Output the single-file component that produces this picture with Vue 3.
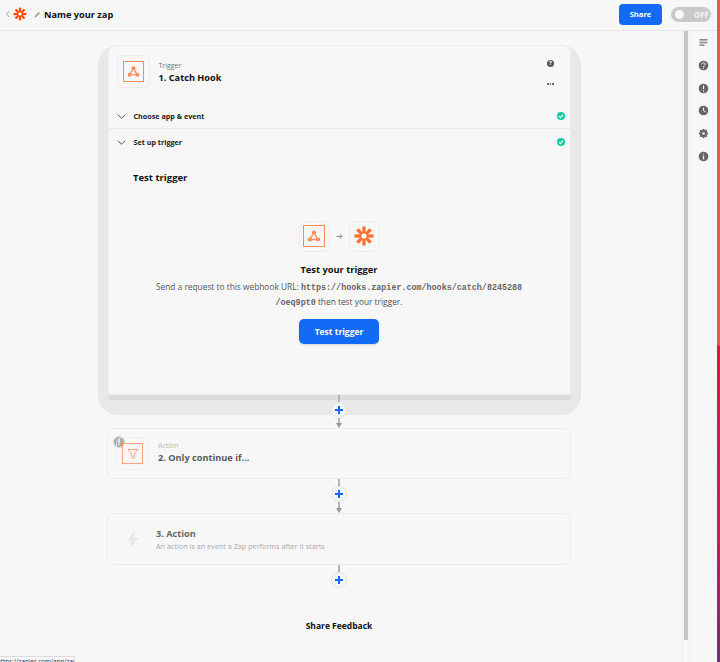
<script setup>
const sideIcons = ['lines', 'help', 'alert', 'clock', 'gear', 'info']
const gearTeeth = [0, 45, 90, 135, 180, 225, 270, 315]
const zapSpokes = [0, 45, 90, 135]
</script>

<template>
	<div class="app">
		<div class="shell">
			<header class="topbar">
				<div class="crumbs">
					<svg class="back" width="6" height="8" viewBox="0 0 6 8"><path d="M4.5 .8 1.5 4l3 3.2" fill="none" stroke="#aaa" stroke-width="1"/></svg>
					<svg class="logo" width="14" height="14" viewBox="0 0 14 14">
						<line v-for="a in zapSpokes" :key="a" x1="7" y1="0.6" x2="7" y2="13.4" stroke="#ff4a00" stroke-width="2.3" :transform="`rotate(${a} 7 7)`"/>
						<circle cx="7" cy="7" r="1.7" fill="#f7f7f7"/>
					</svg>
					<svg class="pencil" width="7" height="7" viewBox="0 0 7 7"><path d="M.6 6.4.9 4.9 4.9.9l1.2 1.2-4 4z" fill="#999"/></svg>
					<span class="zap-name">Name your zap</span>
				</div>
				<div class="actions">
					<button class="share">Share</button>
					<div class="toggle"><i></i><span>OFF</span></div>
				</div>
			</header>

			<div class="body">
				<main class="canvas">
					<section class="halo">
						<div class="card-open">
							<div class="step-head">
								<div class="icon-box">
									<div class="hook-square">
										<svg width="13" height="13" viewBox="0 0 16 16"><g fill="#ff8a5c"><circle cx="8" cy="4" r="2.4"/><circle cx="3.2" cy="12" r="2.4"/><circle cx="12.8" cy="12" r="2.4"/></g><path d="M7.4 5 3.6 11.4M3.2 12h9.6M9 6l3.2 5.6" fill="none" stroke="#ff8a5c" stroke-width="1.5"/></svg>
									</div>
								</div>
								<div class="step-text">
									<span class="kind">Trigger</span>
									<strong>1. Catch Hook</strong>
								</div>
								<div class="head-tools">
									<span class="q">?</span>
									<span class="dots"><i></i><i></i><i></i></span>
								</div>
							</div>

							<div class="row row-line">
								<svg class="chev" width="9" height="5" viewBox="0 0 9 5"><path d="M.7.7 4.5 4.2 8.3.7" fill="none" stroke="#555" stroke-width="1"/></svg>
								<span>Choose app &amp; event</span>
								<span class="ok"><svg width="6" height="6" viewBox="0 0 6 6"><path d="M1 3.2 2.4 4.6 5 1.6" fill="none" stroke="#fff" stroke-width="1.1"/></svg></span>
							</div>
							<div class="row">
								<svg class="chev" width="9" height="5" viewBox="0 0 9 5"><path d="M.7.7 4.5 4.2 8.3.7" fill="none" stroke="#555" stroke-width="1"/></svg>
								<span>Set up trigger</span>
								<span class="ok"><svg width="6" height="6" viewBox="0 0 6 6"><path d="M1 3.2 2.4 4.6 5 1.6" fill="none" stroke="#fff" stroke-width="1.1"/></svg></span>
							</div>

							<h2 class="test-title">Test trigger</h2>

							<div class="test-body">
								<div class="pair">
									<div class="zap-box">
										<div class="hook-square large">
											<svg width="14" height="14" viewBox="0 0 16 16"><g fill="#ff8a5c"><circle cx="8" cy="4" r="2.4"/><circle cx="3.2" cy="12" r="2.4"/><circle cx="12.8" cy="12" r="2.4"/></g><path d="M7.4 5 3.6 11.4M3.2 12h9.6M9 6l3.2 5.6" fill="none" stroke="#ff8a5c" stroke-width="1.5"/></svg>
										</div>
									</div>
									<svg class="arrow" width="7" height="7" viewBox="0 0 7 7"><path d="M.5 3.5h5.5M3.8 1.2 6 3.5 3.8 5.8" fill="none" stroke="#888" stroke-width="1"/></svg>
									<div class="zap-box">
										<svg width="20" height="20" viewBox="0 0 20 20">
											<line v-for="a in zapSpokes" :key="a" x1="10" y1="0.5" x2="10" y2="19.5" stroke="#ff6d2e" stroke-width="3.2" :transform="`rotate(${a} 10 10)`"/>
											<circle cx="10" cy="10" r="2.6" fill="#f7f7f7"/>
										</svg>
									</div>
								</div>
								<h3>Test your trigger</h3>
								<p>Send a request to this webhook URL: <code>https://hooks.zapier.com/hooks/catch/8245288</code><br><code>/oeq9pt0</code> then test your trigger.</p>
								<button class="test-btn">Test trigger</button>
							</div>
						</div>
					</section>

					<div class="connector first">
						<span class="stem"></span>
						<span class="plus"></span>
						<span class="stem grow"></span>
						<span class="tip"></span>
					</div>

					<section class="card-closed filter">
						<span class="warn">!</span>
						<div class="icon-box faded">
							<div class="hook-square">
								<svg width="12" height="12" viewBox="0 0 12 12"><path d="M1 1.5h10L7.2 6v4.5L4.8 9V6z" fill="none" stroke="#ff8a5c" stroke-width="1"/></svg>
							</div>
						</div>
						<div class="step-text">
							<span class="kind">Action</span>
							<strong>2. Only continue if...</strong>
						</div>
					</section>

					<div class="connector">
						<span class="stem"></span>
						<span class="plus"></span>
						<span class="stem grow"></span>
						<span class="tip"></span>
					</div>

					<section class="card-closed blank">
						<svg class="bolt" width="14" height="17" viewBox="0 0 14 17"><path d="M8.5 0 1.5 9.5h4L4 17l8.5-10H8z" fill="#e6e6e6"/></svg>
						<div class="step-text">
							<strong>3. Action</strong>
							<span class="hint">An action is an event a Zap performs after it starts</span>
						</div>
					</section>

					<div class="connector last">
						<span class="stem"></span>
						<span class="plus"></span>
					</div>

					<div class="feedback">Share Feedback</div>
				</main>

				<div class="track"><div class="thumb"></div></div>

				<aside class="side">
					<template v-for="name in sideIcons" :key="name">
						<svg width="11" height="11" viewBox="0 0 11 11">
							<g v-if="name === 'lines'" fill="#8a8a8a"><rect x="1.5" y="2" width="8" height="1.6"/><rect x="1.5" y="4.7" width="8" height="1.6"/><rect x="1.5" y="7.4" width="5" height="1.6"/></g>
							<g v-else-if="name === 'gear'">
								<line v-for="a in gearTeeth" :key="a" x1="5.5" y1="1" x2="5.5" y2="10" stroke="#666" stroke-width="1.7" :transform="`rotate(${a} 5.5 5.5)`"/>
								<circle cx="5.5" cy="5.5" r="3.2" fill="#666"/>
								<circle cx="5.5" cy="5.5" r="1.3" fill="#f7f7f7"/>
							</g>
							<g v-else>
								<circle cx="5.5" cy="5.5" r="4.8" fill="#666"/>
								<path v-if="name === 'help'" d="M4 4.3c0-2 3.1-2 3.1-.1 0 1.2-1.6 1.1-1.6 2.5" fill="none" stroke="#f7f7f7" stroke-width="1"/>
								<circle v-if="name === 'help'" cx="5.5" cy="8.2" r=".6" fill="#f7f7f7"/>
								<path v-if="name === 'alert'" d="M5.5 2.5v3.6" stroke="#f7f7f7" stroke-width="1.2"/>
								<circle v-if="name === 'alert'" cx="5.5" cy="8" r=".7" fill="#f7f7f7"/>
								<path v-if="name === 'clock'" d="M5.5 2.6v3l2 1.4" fill="none" stroke="#f7f7f7" stroke-width="1"/>
								<circle v-if="name === 'info'" cx="5.5" cy="3.1" r=".7" fill="#f7f7f7"/>
								<path v-if="name === 'info'" d="M5.5 4.8v3.6" stroke="#f7f7f7" stroke-width="1.2"/>
							</g>
						</svg>
					</template>
				</aside>
			</div>

			<div class="url-tip">https://zapier.com/app/zaps</div>
		</div>
		<div class="stripe"></div>
	</div>
</template>

<style scoped>
.app
{
	width: 720px;
	height: 662px;
	display: flex;
	overflow: hidden;
	background: #f7f7f7;
	font-family: "Open Sans", "Liberation Sans", sans-serif;
	color: #111;
}
.shell
{
	flex: 1;
	min-width: 0;
	display: flex;
	flex-direction: column;
	position: relative;
}
.stripe
{
	width: 3px;
	background: linear-gradient(#d8604e 0, #d8604e 345px, #d81b3f 346px, #b92160 540px, #7d2a6c 100%);
}

.topbar
{
	height: 31px;
	flex: none;
	box-sizing: border-box;
	border-bottom: 1px solid #e6e6e6;
	display: flex;
	justify-content: space-between;
	align-items: center;
	padding: 0 6px 2px 5px;
}
.crumbs
{
	display: flex;
	align-items: center;
}
.back
{
	margin-right: 2px;
}
.logo
{
	margin-right: 7px;
}
.pencil
{
	margin-right: 3px;
}
.zap-name
{
	font-size: 9.2px;
	font-weight: 700;
}
.actions
{
	display: flex;
	align-items: center;
	gap: 9px;
}
.share
{
	width: 43px;
	height: 21px;
	border: 0;
	padding: 0;
	border-radius: 4px;
	background: #136bf5;
	color: #fff;
	font: 700 7.6px "Open Sans", sans-serif;
}
.toggle
{
	width: 40px;
	height: 15px;
	box-sizing: border-box;
	border-radius: 8px;
	background: #c9c9c9;
	display: flex;
	align-items: center;
	justify-content: space-between;
	padding: 0 2px 0 4px;
	color: #f5f5f5;
	font-size: 8px;
	font-weight: 700;
}
.toggle i
{
	width: 9px;
	height: 9px;
	border-radius: 50%;
	background: #f7f7f7;
}

.body
{
	flex: 1;
	min-height: 0;
	display: flex;
}
.canvas
{
	width: 678px;
	flex: none;
	display: flex;
	flex-direction: column;
	align-items: center;
	padding-top: 14px;
	box-sizing: border-box;
}

.halo
{
	width: 483px;
	box-sizing: border-box;
	padding: 0 10px 20px;
	background: #e8e8e8;
	border-radius: 20px;
	flex: none;
}
.card-open
{
	height: 350px;
	background: #f7f7f7;
	border-radius: 8px 8px 2px 2px;
	box-shadow: 0 5px 0 #dcdcdc;
	outline: 1px solid #ececec;
	outline-offset: -1px;
}
.step-head
{
	height: 59px;
	box-sizing: border-box;
	padding: 10px 14px 0 9px;
	display: flex;
}
.icon-box
{
	width: 33px;
	height: 33px;
	box-sizing: border-box;
	border: 1px solid #ececec;
	border-radius: 6px;
	display: flex;
	align-items: center;
	justify-content: center;
	flex: none;
}
.hook-square
{
	width: 21px;
	height: 21px;
	box-sizing: border-box;
	border: 1px solid #ff8a5c;
	display: flex;
	align-items: center;
	justify-content: center;
}
.hook-square.large
{
	width: 22px;
	height: 22px;
}
.step-text
{
	display: flex;
	flex-direction: column;
	margin-left: 9px;
}
.step-head .step-text
{
	padding-top: 5px;
}
.step-text strong
{
	font-size: 9.2px;
	line-height: 14px;
	font-weight: 700;
}
.kind
{
	font-size: 7px;
	line-height: 11px;
	color: #777;
}
.head-tools
{
	margin-left: auto;
	width: 12px;
	padding-top: 5px;
	display: flex;
	flex-direction: column;
	align-items: center;
	gap: 16px;
}
.q
{
	width: 7px;
	height: 7px;
	border-radius: 50%;
	background: #555;
	color: #f7f7f7;
	font-size: 6px;
	line-height: 7px;
	text-align: center;
	font-weight: 700;
}
.dots
{
	display: flex;
	gap: 1px;
}
.dots i
{
	width: 1.5px;
	height: 1.5px;
	background: #666;
}

.row
{
	height: 26px;
	box-sizing: border-box;
	padding: 0 6px 0 9px;
	display: flex;
	align-items: center;
	font-size: 7.2px;
	font-weight: 700;
	color: #222;
}
.row-line
{
	height: 25px;
	border-bottom: 1px solid #e8e8e8;
}
.chev
{
	margin-right: 8px;
}
.ok
{
	margin-left: auto;
	width: 8px;
	height: 8px;
	border-radius: 50%;
	background: #13c9a0;
	display: flex;
	align-items: center;
	justify-content: center;
}

.test-title
{
	margin: 16px 0 0 25.5px;
	font-size: 9.5px;
	line-height: 14px;
	font-weight: 700;
}
.test-body
{
	margin-top: 35px;
	display: flex;
	flex-direction: column;
	align-items: center;
}
.pair
{
	display: flex;
	align-items: center;
	gap: 6px;
	height: 32px;
}
.zap-box
{
	width: 31px;
	height: 31px;
	box-sizing: border-box;
	border: 1px solid #ececec;
	border-radius: 7px;
	display: flex;
	align-items: center;
	justify-content: center;
}
.test-body h3
{
	margin: 11px 0 0;
	font-size: 9.3px;
	line-height: 14px;
	font-weight: 700;
}
.test-body p
{
	margin: 3px 0 0;
	font-size: 8.35px;
	line-height: 13px;
	text-align: center;
	color: #555;
	white-space: nowrap;
}
.test-body code
{
	font-family: "Liberation Mono", monospace;
	font-size: 8.4px;
	font-weight: 700;
	color: #666;
}
.test-btn
{
	margin-top: 9px;
	width: 80px;
	height: 25px;
	border: 0;
	padding: 0;
	border-radius: 5px;
	background: #136bf5;
	box-shadow: 0 1px 2px rgba(0,0,0,0.15);
	color: #fff;
	font: 700 8.5px "Open Sans", sans-serif;
}

.connector
{
	height: 34px;
	flex: none;
	display: flex;
	flex-direction: column;
	align-items: center;
	position: relative;
}
.connector.first
{
	margin-top: -20px;
	height: 33px;
}
.connector.last
{
	height: 23px;
}
.stem
{
	width: 2px;
	height: 7px;
	background: #b5b5b5;
	flex: none;
}
.stem.grow
{
	flex: 1;
	height: auto;
}
.plus
{
	width: 16px;
	height: 16px;
	flex: none;
	border-radius: 50%;
	border: 1px solid #e4e4e4;
	box-sizing: border-box;
	background:
		linear-gradient(#136bf5, #136bf5) center / 8px 2px no-repeat,
		linear-gradient(#136bf5, #136bf5) center / 2px 8px no-repeat,
		#f5f5f5;
}
.tip
{
	width: 0;
	height: 0;
	flex: none;
	border-left: 3.5px solid transparent;
	border-right: 3.5px solid transparent;
	border-top: 5px solid #999;
}

.card-closed
{
	width: 464px;
	box-sizing: border-box;
	flex: none;
	border: 1px solid #ececec;
	border-radius: 7px;
	display: flex;
	position: relative;
}
.filter
{
	height: 51px;
	padding: 8px 0 0 8px;
}
.faded
{
	opacity: 0.75;
}
.filter .hook-square svg
{
	display: block;
}
.filter .step-text
{
	padding-top: 3px;
	opacity: 0.7;
}
.filter .kind
{
	color: #999;
}
.warn
{
	position: absolute;
	left: 5px;
	top: 7px;
	width: 12px;
	height: 12px;
	border-radius: 50%;
	background: #aaa;
	border: 1px solid #ddd;
	box-sizing: border-box;
	color: #fff;
	font-size: 8px;
	font-weight: 700;
	line-height: 10px;
	text-align: center;
}
.blank
{
	height: 52px;
	padding-left: 18px;
	align-items: center;
}
.bolt
{
	flex: none;
}
.blank .step-text
{
	margin-left: 16px;
}
.blank strong
{
	color: #666;
}
.hint
{
	font-size: 7.25px;
	line-height: 11px;
	color: #aaa;
}

.feedback
{
	margin-top: 32px;
	font-size: 8.5px;
	font-weight: 700;
	line-height: 12px;
	color: #111;
}

.track
{
	width: 8px;
	flex: none;
	margin-left: 4px;
	box-sizing: border-box;
	border-left: 1px solid #ececec;
	border-right: 1px solid #ececec;
	padding: 0 1px;
}
.thumb
{
	height: 609px;
	background: #c5c5c5;
}
.side
{
	width: 27px;
	flex: none;
	padding-top: 6px;
	display: flex;
	flex-direction: column;
	align-items: center;
	gap: 11.8px;
}

.url-tip
{
	position: absolute;
	left: -4px;
	bottom: -6px;
	width: 79px;
	height: 12px;
	box-sizing: border-box;
	border: 1px solid #ddd;
	background: #f7f7f7;
	font-size: 6.3px;
	line-height: 10px;
	color: #333;
	overflow: hidden;
	white-space: nowrap;
}
</style>
